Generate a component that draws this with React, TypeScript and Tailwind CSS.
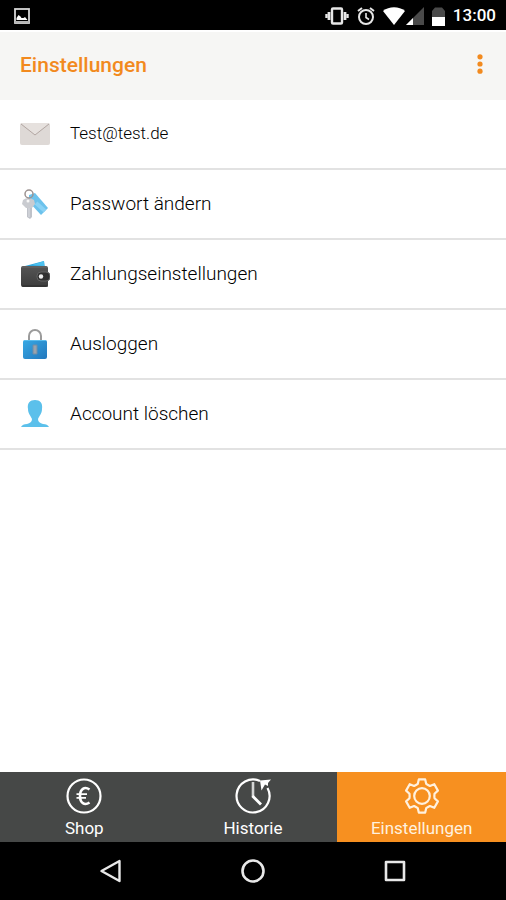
import type { ReactNode } from "react"

const ImageIcon = () => (
  <svg width="16" height="16" viewBox="0 0 16 16" aria-hidden="true">
    <rect x="1" y="1" width="14" height="14" fill="none" stroke="#d6d6d6" strokeWidth="1.800" />
    <path d="M2.500 12V10l2-3 2 1.500 1 1.500h2l1.500-1 2.500 3z" fill="#fff" />
    <path d="M1 14h14" stroke="#b5b5b5" strokeWidth="2" />
  </svg>
)

const VibrateIcon = () => (
  <svg width="24" height="18" viewBox="0 0 24 18" fill="none" stroke="#e6e6e6" aria-hidden="true">
    <rect x="7" y="1.500" width="10" height="15" rx="1" strokeWidth="2.400" />
    <path d="M4 5v8M20 5v8" strokeWidth="2.800" />
    <path d="M1.500 7v4M22.500 7v4" strokeWidth="2.400" />
  </svg>
)

const AlarmIcon = () => (
  <svg width="18" height="18" viewBox="0 0 18 18" fill="none" stroke="#e6e6e6" aria-hidden="true">
    <circle cx="9" cy="10" r="7" strokeWidth="2" />
    <path d="M9 6v4.500l3 2" strokeWidth="1.600" />
    <path d="M1 4l4-3M17 4l-4-3" strokeWidth="2" />
  </svg>
)

const WifiIcon = () => (
  <svg width="22" height="18" viewBox="0 0 22 18" aria-hidden="true">
    <path d="M11 18L0 4C6-1 16-1 22 4z" fill="#fff" />
  </svg>
)

const SignalIcon = () => (
  <svg width="18" height="18" viewBox="0 0 18 18" aria-hidden="true">
    <path d="M0 18L18 0v18z" fill="#4a4a4a" />
    <path d="M0 18l7-7v7z" fill="#fff" />
  </svg>
)

const BatteryIcon = () => (
  <svg width="13" height="19" viewBox="0 0 13 19" aria-hidden="true">
    <path d="M0 4l3-3.500h7L13 4v7H0z" fill="#4a4a4a" />
    <path d="M0 10h13v9H0z" fill="#fff" />
  </svg>
)

const MailIcon = () => (
  <svg width="30" height="30" viewBox="0 0 30 30" aria-hidden="true">
    <rect y="4" width="30" height="22" rx="2" fill="#ded9d6" />
    <path d="M1 4h28L15 16z" fill="#e6e1de" />
    <path d="M1 5l14 11L29 5" fill="none" stroke="#b3a7a3" strokeWidth="1" />
  </svg>
)

const KeyIcon = () => (
  <svg width="30" height="30" viewBox="0 0 30 30" aria-hidden="true">
    <path d="M9 6l6-2 13 15-7 7L9 13z" fill="#6cc2ec" />
    <path d="M16 14l9 8" stroke="#8ad2f5" strokeWidth="4" />
    <path d="M7 17h5v11l-2 2-3-2z" fill="#bfc2c9" />
    <path d="M9 17v11" stroke="#dcdee3" strokeWidth="1" />
    <path d="M3 11q5-4 11 0l1 4-3 4H6l-4-4z" fill="#c9cbd0" />
    <circle cx="8" cy="12" r="1.500" fill="#f7f7f7" />
    <circle cx="9" cy="5" r="4" fill="none" stroke="#9c9290" strokeWidth="1.500" />
  </svg>
)

const WalletIcon = () => (
  <svg width="30" height="30" viewBox="0 0 30 30" aria-hidden="true">
    <defs>
      <linearGradient id="wallet" x1="0" y1="0" x2="0" y2="1">
        <stop offset="0" stopColor="#555" />
        <stop offset="1" stopColor="#3c3c3c" />
      </linearGradient>
    </defs>
    <path d="M5 7l19-5 1 7H5z" fill="#2fa6dc" />
    <path d="M12 6l12-4v5z" fill="#4cc0ee" />
    <rect x="1" y="7" width="27" height="21" rx="2" fill="url(#wallet)" />
    <path d="M2 8h25" stroke="#6a6a6a" strokeWidth="1" />
    <path d="M2 27h26" stroke="#2b2b2b" strokeWidth="1" />
    <rect x="17" y="13" width="13" height="9" rx="4" fill="#303030" stroke="#626262" strokeWidth="1" />
    <circle cx="21" cy="17.500" r="2.200" fill="#eee" />
  </svg>
)

const LockIcon = () => (
  <svg width="30" height="30" viewBox="0 0 30 30" aria-hidden="true">
    <defs>
      <linearGradient id="lock" x1="0" y1="0" x2="1" y2="1">
        <stop offset="0" stopColor="#38a9e4" />
        <stop offset="1" stopColor="#2277bd" />
      </linearGradient>
    </defs>
    <path d="M9 12V7a6 6 0 0 1 12 0v5" fill="none" stroke="#9b9b9b" strokeWidth="2" />
    <rect x="3" y="11" width="24" height="19" rx="2" fill="url(#lock)" />
    <path d="M4 11.500h22" stroke="#5bbdee" strokeWidth="1" />
    <path d="M13 16h4v9h-4z" fill="#9aa3ac" stroke="#6e8ca8" strokeWidth="1" />
  </svg>
)

const PersonIcon = () => (
  <svg width="30" height="30" viewBox="0 0 30 30" fill="#5bc0eb" aria-hidden="true">
    <path d="M15 1c5 0 8 3 7 9 0 5-3 7-4 10 0 3 2 4 5 5 3 0 5 1 6 3H1c1-2 3-3 6-3 3-1 5-2 5-5-1-3-4-5-4-10-1-6 2-9 7-9z" />
  </svg>
)

const ShopIcon = () => (
  <svg width="36" height="36" viewBox="0 0 36 36" fill="none" stroke="#fff" aria-hidden="true">
    <circle cx="18" cy="18" r="16.500" strokeWidth="2.200" />
    <path d="M23.500 11.500c-5-3.500-9.500-.5-9.500 6.500s4.500 10 9.500 6.500" strokeWidth="2.600" />
    <path d="M10.500 16.200H21M10.500 19.800h9.500" strokeWidth="1.800" />
  </svg>
)

const HistoryIcon = () => (
  <svg width="36" height="36" viewBox="0 0 36 36" fill="none" stroke="#fff" aria-hidden="true">
    <path d="M25 3A16.500 16.500 0 1 0 32.500 10" strokeWidth="2.200" />
    <path d="M18 4v15" strokeWidth="2.600" stroke="#d4d5d5" />
    <path d="M17.500 18l8.500 8.500" strokeWidth="2.800" />
    <path d="M25 2.500L36 1.500l-3 3.500v3l-3-1.500-3.500 6z" fill="#fff" stroke="none" />
  </svg>
)

const GearIcon = () => (
  <svg width="36" height="36" viewBox="-18 -18 36 36" fill="none" stroke="#fff1df" strokeWidth="2.200" strokeLinejoin="round" aria-hidden="true">
    <path d="M-3.200-16.600H3.200L4.200-12.200Q6-11 7.900-10L12.300-11.800 15.900-5.400 12.500-2.200Q12.200 0 12.500 2.200L15.900 5.400 12.300 11.800 7.900 10Q6 11 4.200 12.200L3.200 16.600H-3.200L-4.200 12.200Q-6 11-7.900 10L-12.300 11.800-15.900 5.400-12.500 2.200Q-12.200 0-12.500-2.200L-15.900-5.400-12.300-11.800-7.900-10Q-6-11-4.200-12.200z" />
    <circle r="7.800" />
  </svg>
)

type Item = {
  label: string
  icon: ReactNode
  className: string
}

const items: Item[] = [
  { label: "Test@test.de", icon: <MailIcon />, className: "text-[17px]" },
  { label: "Passwort ändern", icon: <KeyIcon />, className: "text-[19px]" },
  { label: "Zahlungseinstellungen", icon: <WalletIcon />, className: "text-[19px]" },
  { label: "Ausloggen", icon: <LockIcon />, className: "text-[19px]" },
  { label: "Account löschen", icon: <PersonIcon />, className: "text-[19px]" },
]

const tabs: Item[] = [
  { label: "Shop", icon: <ShopIcon />, className: "bg-[#464847] text-white" },
  { label: "Historie", icon: <HistoryIcon />, className: "bg-[#464847] text-white" },
  { label: "Einstellungen", icon: <GearIcon />, className: "bg-[#f79020] text-[#fff1df]" },
]

const StatusBar = () => (
  <div className="flex h-[30px] items-center bg-black pl-3.5 pr-2.5 pt-0.5 text-white">
    <ImageIcon />
    <div className="ml-auto flex items-center gap-2">
      <VibrateIcon />
      <AlarmIcon />
      <div className="flex items-center gap-px">
        <WifiIcon />
        <SignalIcon />
      </div>
      <BatteryIcon />
      <span className="text-[17px] font-medium">13:00</span>
    </div>
  </div>
)

const App = () => {
  return (
    <div className="flex min-h-screen flex-col bg-white font-['Roboto',sans-serif]">
      <StatusBar />
      <header className="flex h-[70px] items-center justify-between border-t-2 border-white bg-[#f6f6f4] pl-5 pr-4">
        <h1 className="text-[21px] font-medium text-[#f28a1e]">Einstellungen</h1>
        <button type="button" aria-label="Menü" className="flex w-5 justify-center pb-3 pt-2">
          <svg width="6" height="20" viewBox="0 0 6 20" fill="#f28a1e" aria-hidden="true">
            <circle cx="3" cy="2.800" r="2.600" />
            <circle cx="3" cy="10" r="2.600" />
            <circle cx="3" cy="17.200" r="2.600" />
          </svg>
        </button>
      </header>

      <main className="flex-1">
        <ul>
          {items.map((item) => (
            <li key={item.label} className="border-b-2 border-[#e2e2e2]">
              <button type="button" className="flex h-[68px] w-full items-center gap-5 px-5 text-left">
                {item.icon}
                <span className={`font-light text-black ${item.className}`}>{item.label}</span>
              </button>
            </li>
          ))}
        </ul>
      </main>

      <nav className="grid h-[70px] grid-cols-3">
        {tabs.map((tab) => (
          <button
            key={tab.label}
            type="button"
            className={`flex flex-col items-center justify-center gap-0.5 pt-1 ${tab.className}`}
          >
            {tab.icon}
            <span className="text-[17px] leading-6">{tab.label}</span>
          </button>
        ))}
      </nav>

      <div className="flex h-[58px] items-center justify-center gap-[118px] bg-black">
        <button type="button" aria-label="Zurück">
          <svg width="24" height="24" viewBox="0 0 24 24" fill="none" stroke="#e8e8e8" strokeWidth="2.400" strokeLinejoin="round" aria-hidden="true">
            <path d="M2.500 12L20.500 2v20z" />
          </svg>
        </button>
        <button type="button" aria-label="Startseite">
          <svg width="24" height="24" viewBox="0 0 24 24" fill="none" stroke="#e8e8e8" strokeWidth="2.600" aria-hidden="true">
            <circle cx="12" cy="12" r="10.500" />
          </svg>
        </button>
        <button type="button" aria-label="Übersicht">
          <svg width="24" height="24" viewBox="0 0 24 24" fill="none" stroke="#e8e8e8" strokeWidth="2.600" strokeLinejoin="round" aria-hidden="true">
            <rect x="3" y="3" width="18" height="18" />
          </svg>
        </button>
      </div>
    </div>
  )
}

export default App
